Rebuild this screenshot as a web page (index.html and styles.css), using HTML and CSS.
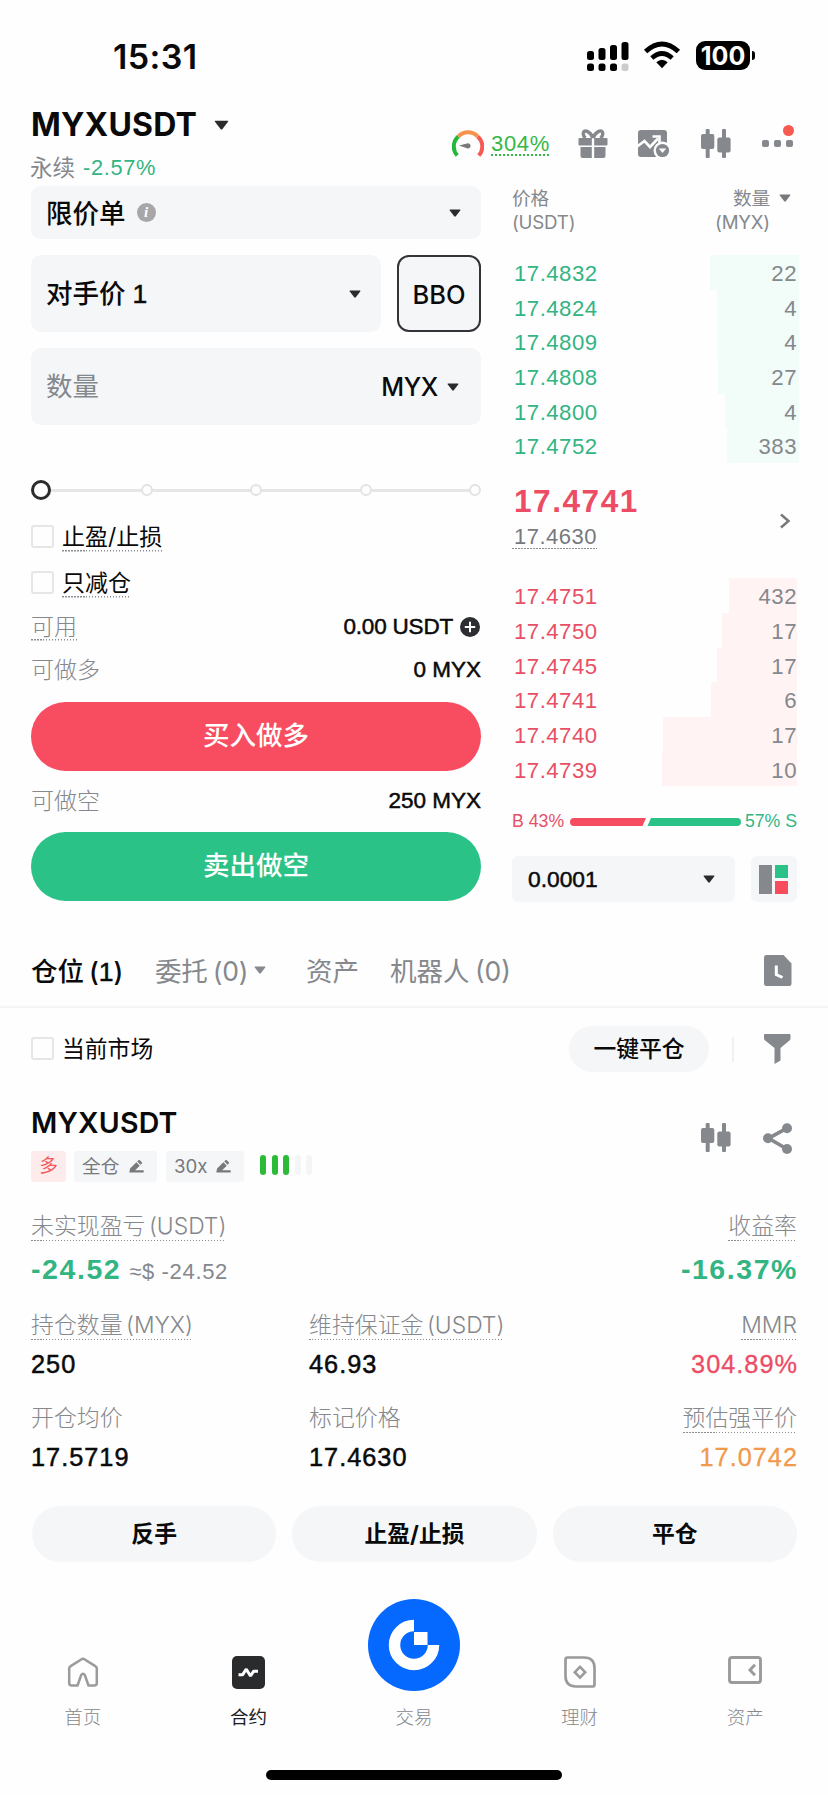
FILE: index.html
```html
<!DOCTYPE html>
<html lang="zh-CN">
<head>
<meta charset="utf-8">
<title>MYXUSDT 永续合约</title>
<link rel="stylesheet" href="styles.css">
</head>
<body>
<svg class="defs" width="0" height="0">
  <symbol id="caret" viewBox="0 0 12 8"><path d="M1.2 .5h9.6q1 0 .4.9L6.8 7.2q-.8.9-1.6 0L.8 1.4Q.2.5 1.2.5z" fill="currentColor"/></symbol>
  <symbol id="candles" viewBox="0 0 30 30"><g fill="currentColor"><rect x="4.7" y="0" width="4" height="29" rx="1"/><rect x="0" y="5" width="13.3" height="15" rx="2"/><rect x="21" y="0" width="4" height="29" rx="1"/><rect x="16.3" y="8.5" width="13.3" height="15" rx="2"/></g></symbol>
  <symbol id="pen" viewBox="0 0 16 15"><g fill="currentColor"><path d="M10 .9q.8-.8 1.6 0l2 2q.8.8 0 1.600L12.400 5.700 8.800 2.100z"/><path d="M7.900 3l3.600 3.600L6.500 11.600H15q.8 0 .8 1.200t-.8 1.200H1.200q-1 0-.8-1L1.200 9.600z"/></g></symbol>
</svg>
<main class="phone">
  <header class="status">
    <span class="clock">15:31</span>
    <div class="sys">
      <svg width="44" height="30" viewBox="0 0 44 30"><rect x="1" y="10" width="7" height="9" rx="2.500"/><rect x="12.500" y="7" width="7" height="12" rx="2.500"/><rect x="24" y="4" width="7" height="15" rx="2.500"/><rect x="35.500" y="1" width="7" height="18" rx="2.500"/><rect x="1" y="22.500" width="7" height="7.500" rx="2.500"/><rect x="12.500" y="22.500" width="7" height="7.500" rx="2.500"/><rect x="24" y="22.500" width="7" height="7.500" rx="2.500"/><rect x="35.500" y="22.500" width="7" height="7.500" rx="2.500" fill="#ccc"/></svg>
      <svg class="wifi" width="38" height="28" viewBox="0 0 38 28"><path d="M2.600 10.500Q19-4.500 35.400 10.500" fill="none" stroke="#000" stroke-width="5"/><path d="M8.800 17Q19 8 29.200 17" fill="none" stroke="#000" stroke-width="4.600"/><path d="M13.300 21.300Q19 16.300 24.700 21.300L19 27.300z"/></svg>
      <span class="battery">100</span><i class="nub"></i>
    </div>
  </header>

  <section class="market">
    <div class="pair">
      <div class="pair-name"><h1>MYXUSDT</h1><svg class="big-caret"><use href="#caret"/></svg></div>
      <div class="pair-sub"><span>永续</span><span class="chg num">-2.57%</span></div>
    </div>
    <div class="tools">
      <svg class="gauge" width="32" height="30" viewBox="0 0 32 30" fill="none" stroke-width="4"><path d="M5.200 26.500A13.300 13.300 0 0 1 6.300 7.600" stroke="#24b83a"/><path d="M6.300 7.600A13.300 13.300 0 0 1 25.600 7.400" stroke="#f5924c"/><path d="M25.600 7.400A13.300 13.300 0 0 1 26.800 26.500" stroke="#f75a52"/><path d="M7 16.600l8-2.200a2.600 2.600 0 1 1 0 4.800z" fill="#77797d"/></svg>
      <span class="mmr-pct num dotted">304%</span>
      <svg class="gift" width="30" height="30" viewBox="0 0 30 30"><path d="M15 9C12 2 6 0 5.200 4.200Q5 7 7.500 9M15 9c3-7 9-9 9.800-4.800Q25 7 22.500 9" fill="none" stroke="#85888c" stroke-width="3.400"/><path d="M1.500 9H13.800V16.500H1.500Q.5 16.500.5 15.500V10Q.5 9 1.500 9zM16.200 9H28.500q1 0 1 1v5.500q0 1-1 1H16.200zM2.500 18H13.800V29H4.500q-2 0-2-2zM16.200 18H27.500v9q0 2-2 2H16.200z" fill="#85888c"/></svg>
      <svg class="chart" width="32" height="28" viewBox="0 0 32 28"><rect x="0" y="0" width="29" height="27" rx="3" fill="#85888c"/><path d="M-1 16.500l7.500-5.500 5.500 6 8-8.500" stroke="#fff" stroke-width="2.600" fill="none"/><path d="M14.500 6.500h7v7" stroke="#fff" stroke-width="2.600" fill="none"/><circle cx="24.500" cy="20.500" r="9" fill="#fff"/><circle cx="24.500" cy="20.500" r="6.600" fill="#85888c"/><path d="M20.800 18.500h7.400l-3.700 4.500z" fill="#fff"/></svg>
      <svg class="candle" width="30" height="30"><use href="#candles"/></svg>
      <span class="more"><i></i><i></i><i></i><b></b></span>
    </div>
  </section>

  <section class="trade">
    <div class="order">
      <div class="field type"><span>限价单</span><span class="info">i</span><svg class="caret push"><use href="#caret"/></svg></div>
      <div class="price-row">
        <div class="field price"><span>对手价 <span class="num med">1</span></span><svg class="caret push"><use href="#caret"/></svg></div>
        <div class="bbo">BBO</div>
      </div>
      <div class="field qty"><span class="hint">数量</span><span class="push unit">MYX</span><svg class="caret"><use href="#caret"/></svg></div>
      <div class="slider"><b></b><s class="seg1"></s><i></i><s></s><i></i><s></s><i></i><s></s><i></i></div>
      <div class="check"><i></i><span class="dotted">止盈/止损</span></div>
      <div class="check"><i></i><span class="dotted">只减仓</span></div>
      <div class="kv first"><span class="dotted">可用</span><b class="num med avail">0.00 USDT</b><svg class="plus" width="20" height="20" viewBox="0 0 20 20"><circle cx="10" cy="10" r="10" fill="#2c2e31"/><path d="M4.800 10h10.400M10 4.800v10.400" stroke="#fff" stroke-width="2"/></svg></div>
      <div class="kv"><span>可做多</span><b class="num med">0 MYX</b></div>
      <div class="btn buy">买入做多</div>
      <div class="kv short"><span>可做空</span><b class="num med">250 MYX</b></div>
      <div class="btn sell">卖出做空</div>
    </div>

    <div class="book">
      <div class="book-head"><div>价格<br>(USDT)</div><div class="right">数量<br>(MYX)</div><svg class="caret"><use href="#caret"/></svg></div>
      <div class="rows green num">
        <div class="row"><span>17.4832</span><em style="width:89px">22</em></div>
        <div class="row"><span>17.4824</span><em style="width:82px">4</em></div>
        <div class="row"><span>17.4809</span><em style="width:82px">4</em></div>
        <div class="row"><span>17.4808</span><em style="width:81px">27</em></div>
        <div class="row"><span>17.4800</span><em style="width:74px">4</em></div>
        <div class="row"><span>17.4752</span><em style="width:72px">383</em></div>
      </div>
      <div class="last num">
        <div><strong>17.4741</strong><span class="dotted mark">17.4630</span></div>
        <svg width="12" height="16" viewBox="0 0 12 16"><path d="M2 1.500L9.500 8 2 14.500" fill="none" stroke="#77797d" stroke-width="2.500"/></svg>
      </div>
      <div class="rows red num">
        <div class="row"><span>17.4751</span><em style="width:68px">432</em></div>
        <div class="row"><span>17.4750</span><em style="width:75px">17</em></div>
        <div class="row"><span>17.4745</span><em style="width:80px">17</em></div>
        <div class="row"><span>17.4741</span><em style="width:86px">6</em></div>
        <div class="row"><span>17.4740</span><em style="width:134px">17</em></div>
        <div class="row"><span>17.4739</span><em style="width:135px">10</em></div>
      </div>
      <div class="ratio"><span class="b">B 43%</span><svg width="171" height="8" viewBox="0 0 171 8"><path d="M4 0H76L72.500 8H4A4 4 0 0 1 4 0z" fill="#f64c5f"/><path d="M81 0H167a4 4 0 0 1 0 8H77.500z" fill="#2bc287"/></svg><span class="s">57% S</span></div>
      <div class="depth">
        <div class="field step"><span class="num med">0.0001</span><svg class="caret push"><use href="#caret"/></svg></div>
        <div class="layout"><svg width="30" height="29" viewBox="0 0 30 29"><rect width="13" height="29" fill="#85888c"/><rect x="16" width="13" height="13" fill="#2bc287"/><rect x="16" y="16" width="13" height="13" fill="#f84d5f"/></svg></div>
      </div>
    </div>
  </section>

  <nav class="tabs">
    <span class="on">仓位 (<span class="num med">1</span>)</span><span class="t2">委托 (0)</span><svg class="caret"><use href="#caret"/></svg><span class="t3">资产</span><span class="t4">机器人 (0)</span>
    <svg class="push history" width="28" height="31" viewBox="0 0 28 31"><path d="M2.500 0H19.500L27.500 8.500V28.500q0 2.500-2.500 2.500H2.500Q0 31 0 28.500V2.500Q0 0 2.500 0z" fill="#85888c"/><path d="M12.300 10.500v9l6.200 3" fill="none" stroke="#fff" stroke-width="3"/></svg>
  </nav>

  <section class="filter">
    <i class="box"></i><span class="cur">当前市场</span>
    <span class="pill push">一键平仓</span><i class="sep"></i>
    <svg width="27" height="30" viewBox="0 0 27 30"><path d="M1 0H25.500q1 0 1 1V4.500q0 1.200-1 2L16.500 14v12.500L10.500 30V14L1.200 6.500Q0 5.700 0 4.500V1Q0 0 1 0z" fill="#85888c"/></svg>
  </section>

  <section class="position">
    <div class="pos-head">
      <div>
        <h2>MYXUSDT</h2>
        <div class="tags"><span class="long">多</span><span class="tag">全仓<svg class="pen"><use href="#pen"/></svg></span><span class="tag lev">30x<svg class="pen"><use href="#pen"/></svg></span><span class="bars"><i></i><i></i><i></i><i class="off"></i><i class="off"></i></span></div>
      </div>
      <div class="pos-tools"><svg width="30" height="30"><use href="#candles"/></svg><svg width="30" height="31" viewBox="0 0 30 31"><path d="M24 5.200L5.500 15.300 24 26" fill="none" stroke="#85888c" stroke-width="3.600"/><g fill="#85888c"><circle cx="24" cy="5.200" r="5"/><circle cx="5" cy="15.300" r="5"/><circle cx="24" cy="26" r="5"/></g></svg></div>
    </div>
    <div class="stats">
      <div class="stat wide"><label class="dotted">未实现盈亏 (USDT)</label><p class="pnl">-24.52<small>≈$ -24.52</small></p></div>
      <div class="stat end"><label class="dotted">收益率</label><p class="pnl">-16.37%</p></div>
      <div class="stat"><label class="dotted">持仓数量 (MYX)</label><p>250</p></div>
      <div class="stat"><label class="dotted">维持保证金 (USDT)</label><p>46.93</p></div>
      <div class="stat end"><label class="dotted">MMR</label><p class="redtxt">304.89%</p></div>
      <div class="stat"><label>开仓均价</label><p>17.5719</p></div>
      <div class="stat"><label>标记价格</label><p>17.4630</p></div>
      <div class="stat end"><label class="dotted">预估强平价</label><p class="orange">17.0742</p></div>
    </div>
    <div class="actions"><span>反手</span><span>止盈/止损</span><span>平仓</span></div>
  </section>

  <footer class="nav">
    <div class="item"><svg width="32" height="32" viewBox="0 0 32 32"><path d="M2.200 27V12.500q0-1.300 1.100-2.100L14.600 3.200q1.400-.8 2.800 0l11.300 7.200q1.100.8 1.100 2.100V27q0 2.500-2.500 2.500H21.500L17.800 19q-1.800-2.500-3.600 0L10.500 29.500H4.700Q2.200 29.500 2.200 27z" fill="none" stroke="#9b9b9d" stroke-width="2.500" stroke-linejoin="round"/></svg><span>首页</span></div>
    <div class="item active"><svg width="33" height="33" viewBox="0 0 33 33"><rect width="33" height="33" rx="5" fill="#2a2b2d"/><path d="M6.500 18.800h4L14.300 13.200l4.200 6.800 3.200-4.800h4.300" fill="none" stroke="#fff" stroke-width="3" stroke-linejoin="bevel"/></svg><span>合约</span></div>
    <div class="item"><div class="orb"><svg width="92" height="92" viewBox="0 0 92 92"><circle cx="46" cy="46" r="46" fill="#0568ff"/><path d="M46 26.500A19.500 19.500 0 1 0 65.500 46" fill="none" stroke="#fff" stroke-width="11.500"/><rect x="46" y="33" width="13.500" height="13" fill="#fff"/></svg></div><span>交易</span></div>
    <div class="item"><svg width="32" height="32" viewBox="0 0 32 32"><path d="M3.500 1.500H20Q30.500 1.500 30.500 12V28.500q0 2-2 2H12Q1.500 30.500 1.500 20V3.500q0-2 2-2z" fill="none" stroke="#9b9b9d" stroke-width="2.700"/><path d="M16 10.800l5.200 5.400-5.200 5.400-5.200-5.400z" fill="none" stroke="#9b9b9d" stroke-width="2.600"/></svg><span>理财</span></div>
    <div class="item"><svg width="34" height="28" viewBox="0 0 34 28"><rect x="1.500" y="1.500" width="31" height="25" rx="2.500" fill="none" stroke="#9b9b9d" stroke-width="2.900"/><path d="M27 8.800L22 14l5 5.200" fill="none" stroke="#9b9b9d" stroke-width="3"/></svg><span>资产</span></div>
  </footer>
  <div class="home-bar"></div>
</main>
</body>
</html>
```

FILE: styles.css
```css
* { box-sizing: border-box; }
body {
  margin: 0;
  background: #fefefe;
  color: #0a0a0b;
  font-family: Inter, "Noto Sans CJK SC", sans-serif;
}
h1, h2, p { margin: 0; }
svg { display: block; flex: none; }
i, em { font-style: normal; }
.defs { position: absolute; }
.phone { width: 828px; height: 1795px; overflow: hidden; }
.push { margin-left: auto; }
.caret { width: 12px; height: 8px; color: #2a2b2d; }
.num { font-family: "Liberation Sans", "Noto Sans CJK SC", sans-serif; letter-spacing: .03em; }
.med { -webkit-text-stroke: .5px currentColor; letter-spacing: 0; }
.dotted {
  background: repeating-linear-gradient(90deg, #8a8d91 0 1.500px, transparent 1.500px 3px) left bottom / 100% 1.500px no-repeat;
}

/* status bar */
.status { height: 92px; padding: 38px 73px 0 113px; display: flex; justify-content: space-between; }
.clock { font-size: 34px; line-height: 38px; font-weight: 600; letter-spacing: .4px; }
.sys { display: flex; align-items: flex-start; padding-top: 3px; }
.wifi { margin-left: 13px; }
.battery { margin-left: 15px; width: 54px; height: 29px; border-radius: 9px; background: #000; color: #fff; font: 700 25px/30px Inter, sans-serif; text-align: center; }
.nub { width: 3px; height: 9px; margin: 10px 0 0 2px; border-radius: 0 3px 3px 0; background: #000; }

/* market header */
.market { height: 94px; padding: 0 31px; display: flex; justify-content: space-between; }
.pair-name { display: flex; align-items: center; height: 66px; }
.pair-name h1 { font-size: 32px; line-height: 66px; font-weight: 700; letter-spacing: .2px; }
.big-caret { width: 15px; height: 10px; margin-left: 17px; color: #2a2b2d; }
.pair-sub { display: flex; gap: 8px; margin: -1px 0 0 -1px; font-size: 22.500px; line-height: 22px; color: #85888c; }
.chg { color: #32b583; font-size: 21.800px; }
.tools { display: flex; align-items: flex-start; padding-top: 37px; }
.mmr-pct { margin: 0 0 0 7px; width: 59px; height: 27px; padding-top: 4px; font-size: 22px; line-height: 22px; color: #35b745; background-image: repeating-linear-gradient(90deg, #35b745 0 2px, transparent 2px 4px); background-size: 100% 2px; }
.gift { margin-left: 28px; }
.chart { margin: 1px 0 0 30px; }
.candle { margin-left: 31px; color: #85888c; }
.more { position: relative; width: 31px; height: 29px; margin: 0 4px 0 31px; display: flex; justify-content: space-between; align-items: center; }
.more i { width: 7px; height: 7px; border-radius: 2px; background: #85888c; }
.more b { position: absolute; right: -1px; top: -4px; width: 11px; height: 11px; border-radius: 50%; background: #f75a50; }

/* order form */
.trade { height: 744px; padding: 0 31px; display: flex; gap: 31px; }
.order { width: 450px; }
.field { display: flex; align-items: center; border-radius: 10px; background: #f4f6f8; padding: 0 20px 0 16px; font-size: 26.500px; font-weight: 500; }
.type { height: 53px; margin-bottom: 16px; }
.type > span:first-child { margin: -3px 0 0 -1px; }
.info { width: 19px; height: 19px; margin-left: 11px; border-radius: 50%; background: #a7a7a9; color: #fff; font: italic 700 15px/19px "Liberation Serif", serif; text-align: center; }
.price-row { display: flex; gap: 16px; height: 77px; margin-bottom: 16px; }
.price { width: 350px; }
.price > span, .hint { margin: -4px 0 0 -1px; }
.bbo { flex: 1; border: 2px solid #333437; border-radius: 12px; background: #f4f6f8; font-size: 25.500px; font-weight: 500; line-height: 75px; text-align: center; }
.qty { height: 77px; padding-right: 22px; }
.unit { font-size: 25px; margin-right: 9px; letter-spacing: -.3px; }
.hint { color: #85888c; font-weight: 400; }
.slider { display: flex; align-items: center; height: 20px; margin: 55px 0 14px; }
.slider b { width: 20px; height: 20px; border: 3px solid #2a2b2d; border-radius: 50%; }
.slider s { flex: 1; height: 3px; background: #e6e6e7; }
.slider .seg1 { flex: .92; }
.slider i { width: 12px; height: 12px; border: 2px solid #e2e2e3; border-radius: 50%; }
.check { display: flex; align-items: center; gap: 8px; height: 46px; font-size: 23px; }
.check i, .box { width: 23px; height: 23px; border: 2px solid #e6e6e7; border-radius: 3px; margin-top: -1px; }
.check .dotted { line-height: 26px; height: 28px; margin-top: 1px; }
.kv { display: flex; align-items: center; height: 43px; font-size: 23px; }
.kv span { color: #85888c; font-weight: 300; line-height: 28px; }
.kv b { margin-left: auto; font-size: 22.500px; font-weight: 400; }
.kv .avail { letter-spacing: -.2px; }
.plus { margin: 0 1px 0 7px; }
.btn { height: 69px; border-radius: 35px; color: #fff; font-size: 26.500px; font-weight: 500; line-height: 67px; text-align: center; }
.first { margin-top: -1px; }
.buy { background: #f84d60; margin: 11px 0 8px; }
.sell { background: #2bc287; margin-top: 10px; }

/* order book */
.book { width: 285px; }
.book-head { position: relative; display: flex; justify-content: space-between; height: 69px; padding-top: 1px; font-size: 18.700px; line-height: 23.500px; color: #85888c; letter-spacing: -.2px; }
.book-head .right { margin-right: 27px; text-align: right; }
.book-head .caret { position: absolute; right: 6px; top: 8px; color: #77797d; }
.row { display: flex; justify-content: space-between; height: 34.700px; line-height: 38px; font-size: 22.200px; }
.row span { padding-left: 2px; }
.row em { color: #85888c; text-align: right; padding-right: 0; }
.green .row { margin-right: -2px; }
.green em { background: #f2fcf9; padding-right: 2px; }
.green span { color: #32b583; }
.red em { background: #fff4f3; }
.red span { color: #e84f65; }
.last { display: flex; justify-content: space-between; height: 115px; padding: 20px 6px 0 2px; }
.last svg { margin-top: 30px; }
.last strong { display: block; font-size: 31.500px; line-height: 36px; color: #ec4c64; letter-spacing: .05em; }
.mark { display: block; width: 85px; height: 25px; margin: 5px 0 0 -2px; padding-left: 2px; font-size: 22px; line-height: 26px; color: #77797d; }
.ratio { display: flex; align-items: center; justify-content: space-between; height: 70px; padding-top: 1px; font: 17.700px "Liberation Sans", sans-serif; white-space: nowrap; }
.b { color: #e84f65; width: 56px; } .s { color: #32b583; width: 55px; text-align: right; }
.depth { display: flex; gap: 16px; }
.step { width: 223px; height: 46px; border-radius: 6px; font-size: 22.800px; }
.layout { flex: 1; height: 46px; padding: 9px 8px; background: #f4f6f8; border-radius: 6px; }

/* tabs */
.tabs { display: flex; align-items: center; height: 78px; padding: 2px 36px 0 31px; border-bottom: 2px solid #f5f5f6; font-size: 26.500px; font-weight: 500; color: #85888c; white-space: nowrap; word-spacing: -2px; }
.tabs .on { color: #0a0a0b; width: 124px; }
.tabs .caret { color: #85888c; margin-top: 2px; }
.t2 { width: 99px; font-weight: 400; letter-spacing: -.2px; }
.t3 { margin-left: 40px; width: 84px; font-weight: 400; }
.t4 { font-weight: 400; }
.history { margin-top: 3px; }
.filter { display: flex; align-items: center; height: 82px; padding: 0 37px 0 31px; font-size: 22.800px; }
.cur { margin: -3px 0 0 8px; }
.pill { width: 140px; height: 46px; border-radius: 23px; background: #f4f6f8; font-weight: 500; line-height: 45px; text-align: center; }
.sep { width: 2px; height: 25px; margin: 0 30px 0 23px; background: #f1f1f2; }

/* position card */
.position { padding: 0 31px; }
.pos-head { display: flex; justify-content: space-between; height: 122px; padding-top: 16px; }
.pos-head h2 { font-size: 28.500px; font-weight: 600; line-height: 34px; letter-spacing: .2px; }
.tags { display: flex; align-items: center; margin-top: 11px; height: 31px; font-size: 18.700px; line-height: 29px; color: #77797d; }
.long { width: 35px; height: 31px; border-radius: 3px; background: #feecec; color: #f2595b; text-align: center; }
.tag { display: flex; align-items: center; justify-content: space-between; width: 83px; height: 31px; margin-left: 8px; padding: 0 13px 1px 8px; border-radius: 3px; background: #f4f6f8; }
.lev { width: 78px; margin-left: 9px; }
.pen { width: 15px; height: 15px; color: #77797d; }
.bars { display: flex; gap: 5.500px; margin: -3px 0 0 16px; }
.bars i { width: 6px; height: 20px; border-radius: 3px; background: #2cbb38; }
.bars .off { background: #f4f5f7; }
.pos-tools { display: flex; gap: 32px; margin-right: 4px; padding-top: 17px; color: #85888c; }
.stats { display: grid; grid-template-columns: 278px 1fr auto; grid-template-rows: 99px 93px 94px; }
.wide { grid-column: span 2; }
.stat { display: flex; flex-direction: column; align-items: flex-start; }
.end { align-items: flex-end; }
.stat label { font-size: 22.900px; line-height: 29px; height: 29px; font-weight: 300; color: #85888c; white-space: nowrap; word-spacing: -3px; }
.stat p { margin-top: 9px; font: 25.300px/30px "Liberation Sans", sans-serif; letter-spacing: .04em; margin-right: -1px; -webkit-text-stroke: .5px currentColor; }
.stat .pnl { font-size: 28.500px; font-weight: 700; margin-top: 13px; color: #32b583; letter-spacing: .055em; -webkit-text-stroke: 0; }
.pnl small { margin-left: 8px; font-size: 22px; font-weight: 400; letter-spacing: .03em; color: #85888c; }
.stat .redtxt { color: #ec4c64; } .stat .orange { color: #f09a4d; }
.stat .redtxt, .stat .orange { -webkit-text-stroke-width: .3px; }
.actions { display: flex; gap: 16px; margin: 8px 0 0 1px; }
.actions span { flex: 1; height: 56px; border-radius: 28px; background: #f4f6f8; font-size: 22.800px; font-weight: 700; line-height: 55px; text-align: center; }

/* bottom navigation */
.nav { display: flex; height: 142px; margin-top: 66px; padding-top: 28px; }
.item { position: relative; flex: 1; display: flex; flex-direction: column; justify-content: space-between; align-items: center; height: 75px; font-size: 18.500px; line-height: 28px; font-weight: 300; color: #85888c; }
.active { color: #1c1d1f; font-weight: 400; }
.item > span { margin-top: auto; }
.orb { position: absolute; top: -57px; left: 37px; }
.home-bar { width: 296px; height: 10px; margin: 0 auto; border-radius: 5px; background: #000; }
```
